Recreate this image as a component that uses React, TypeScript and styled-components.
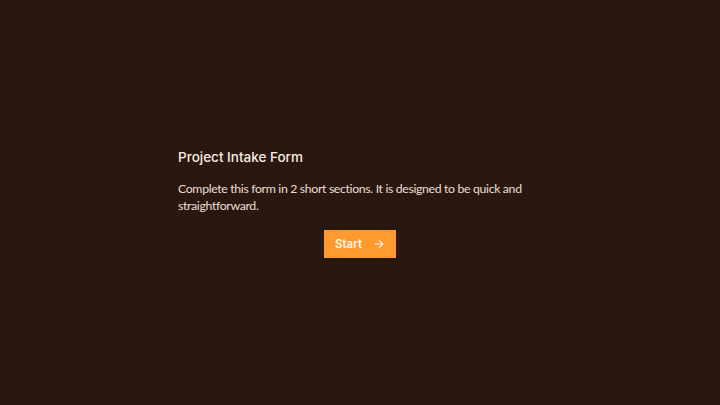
import * as React from 'react';
import styled, { createGlobalStyle } from 'styled-components';

const GlobalStyle = createGlobalStyle`
  html, body, #root {
    margin: 0;
    padding: 0;
    height: 100%;
  }
  body {
    background-color: #2a1810;
    font-family: 'Lato', 'Inter', sans-serif;
  }
`;

const Page = styled.div`
  height: 100vh;
  display: flex;
  align-items: center;
  justify-content: center;
`;

const Card = styled.div`
  width: 364px;
  display: flex;
  flex-direction: column;
`;

const Title = styled.h1`
  margin: 0 0 14px;
  color: #f7ece2;
  font-family: 'Inter', sans-serif;
  font-size: 13.5px;
  font-weight: 500;
  line-height: 18px;
`;

const Description = styled.p`
  margin: 0 0 16px;
  color: #eadfd5;
  font-size: 12.3px;
  font-weight: 400;
  letter-spacing: -0.35px;
  line-height: 17px;
`;

const StartButton = styled.button`
  align-self: center;
  display: flex;
  align-items: center;
  gap: 12px;
  height: 28px;
  padding: 0 12px 0 11px;
  border: none;
  background-color: #ff9a2e;
  color: #fff6ec;
  font-family: 'Inter', sans-serif;
  font-size: 11.5px;
  font-weight: 600;
  cursor: pointer;
`;

function ArrowIcon() {
  return (
    <svg width="10" height="10" viewBox="0 0 24 24" fill="none" stroke="currentColor" strokeWidth="2.8" strokeLinecap="round" strokeLinejoin="round">
      <path d="M3 12h18" />
      <path d="M13 4l8 8-8 8" />
    </svg>
  );
}

function App() {
  return (
    <>
      <GlobalStyle />
      <Page>
        <Card>
          <Title>Project Intake Form</Title>
          <Description>
            Complete this form in 2 short sections. It is designed to be quick and straightforward.
          </Description>
          <StartButton>
            Start
            <ArrowIcon />
          </StartButton>
        </Card>
      </Page>
    </>
  );
}

export default App;
